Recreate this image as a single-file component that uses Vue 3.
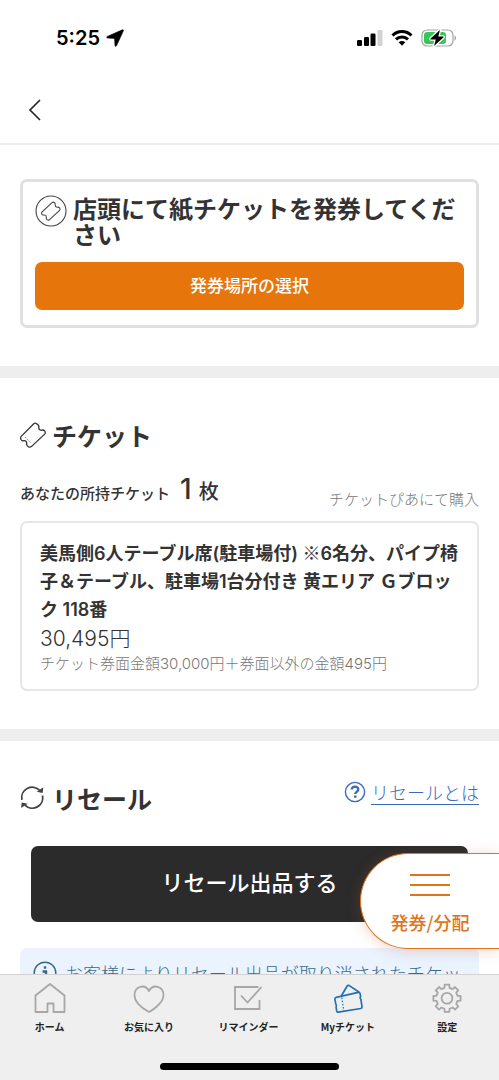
<script setup>
const tabs = [
  { id: 'home', label: 'ホーム' },
  { id: 'heart', label: 'お気に入り' },
  { id: 'reminder', label: 'リマインダー' },
  { id: 'ticket', label: 'Myチケット' },
  { id: 'settings', label: '設定' },
]

// Outline of an eight-toothed gear around the centre of a 32x32 box.
const gearPath = (() => {
  const points = []
  for (let i = 0; i < 8; i++) {
    const mid = (i * Math.PI) / 4
    for (const [offset, radius] of [[-0.24, 10.8], [-0.17, 13.8], [0.17, 13.8], [0.24, 10.8]]) {
      const a = mid + offset
      points.push(`${(16 + radius * Math.cos(a)).toFixed(2)} ${(16.3 + radius * Math.sin(a)).toFixed(2)}`)
    }
  }
  return `M${points.join('L')}z`
})()
</script>

<template>
  <div class="screen">
    <div class="status">
      <div class="time">
        <span>5:25</span>
        <svg width="18" height="18" viewBox="0 0 18 18"><path d="M16.400.8 1.300 7.400c-.9.500-.7 1.500.3 1.600l6.900.5.500 7c.1 1 1 1.200 1.500.3L17.400 1.800c.3-.7-.2-1.300-1-1z" fill="#000" stroke="#000" stroke-width=".6" /></svg>
      </div>
      <div class="signals">
        <svg width="26" height="18" viewBox="0 0 26 18">
          <rect x="0" y="11" width="5" height="6" rx="1.300" />
          <rect x="7" y="8" width="5" height="9" rx="1.300" />
          <rect x="13.500" y="4.500" width="5" height="12.500" rx="1.300" />
          <rect x="20.500" y="1" width="5" height="16" rx="1.300" fill="#d2d2d2" />
        </svg>
        <svg width="22" height="18" viewBox="0 0 22 18" fill="none" stroke="#000" stroke-width="3">
          <path d="M1.500 6.500c5.200-5.300 13.800-5.300 19 0" />
          <path d="M5 10.400c3.300-3.300 8.700-3.300 12 0" />
          <path d="M7.700 13.300c1.900-1.800 4.700-1.800 6.600 0L11 16.800z" fill="#000" stroke="none" />
        </svg>
        <svg width="36" height="18" viewBox="0 0 36 18">
          <rect x="1" y="1" width="31" height="16" rx="5" fill="#fff" stroke="#a4a4a4" stroke-width="1.200" />
          <rect x="3" y="3" width="22" height="12" rx="3.200" fill="#35c75a" />
          <path d="M33.500 6.500c2 .6 2 4.400 0 5z" fill="#a4a4a4" />
          <path d="M19 1 9.600 9.500c-.4.5-.2 1 .5 1h4.700L13 17l9.400-8.500c.4-.5.2-1-.5-1h-4.600z" stroke="#fff" stroke-width="2.600" paint-order="stroke" />
        </svg>
      </div>
    </div>

    <header class="header">
      <button class="back" type="button" aria-label="戻る">
        <svg width="14" height="24" viewBox="0 0 14 24" fill="none" stroke="#222" stroke-width="1.600"><path d="M12 2 2 12l10 10" /></svg>
      </button>
    </header>

    <main class="content">
      <section class="section issue">
        <div class="notice">
          <div class="notice-head">
            <svg class="notice-icon" width="32" height="32" viewBox="0 0 32 32" fill="none" stroke="#444" stroke-width="1.100" stroke-linejoin="round">
              <circle cx="16" cy="16" r="15" />
              <path d="M6.900 17.200 17 7.600Q18.300 6.600 19.600 7.700 20.500 8.700 20.200 10 20.200 12 22.200 12.200 23.800 11.900 24.700 13 25.500 14.300 24.600 15.400L14.500 24.700Q13.200 25.600 12 24.600 11 23.600 11.300 22.300 11.400 20.300 9.500 20 7.800 20.300 6.900 19.300 6.100 18.200 6.900 17.200z" />
            </svg>
            <h2>店頭にて紙チケットを発券してください</h2>
          </div>
          <button class="primary" type="button">発券場所の選択</button>
        </div>
      </section>

      <section class="section tickets">
        <h2 class="title">
          <svg width="26" height="26" viewBox="0 0 26 26" fill="none" stroke="#333" stroke-width="1.300" stroke-linejoin="round">
            <path d="M1.200 14.400 13.800 1.700Q15.200.6 16.600 1.700L18.400 3.300Q19.200 4.200 18.700 5.400 18.600 7.200 20 7.900 21.300 8.500 22.600 8 23.700 7.900 24.800 9.200 25.800 10.800 24.700 12.100L11.400 24.600Q9.900 25.700 8.400 24.800L7 23.400Q6.400 22.500 6.800 21.300 6.800 19.600 5.400 18.900 4 18.500 2.800 18.900 1.700 18.800.9 17.300.1 15.700 1.200 14.400z" />
            <path d="m5.200 15.200 6.200 6.400" stroke-dasharray="1.500 1.500" stroke="#777" stroke-width="1" />
          </svg>
          チケット
        </h2>
        <div class="summary">
          <p class="owned">あなたの所持チケット<strong>1</strong><b>枚</b></p>
          <p class="source">チケットぴあにて購入</p>
        </div>
        <article class="card">
          <h3>美馬側6人テーブル席(駐車場付) <span class="mark">※</span>6名分、パイプ椅子＆テーブル、駐車場1台分付き 黄エリア Ｇブロック 118番</h3>
          <p class="price">30,495円</p>
          <p class="detail">チケット券面金額30,000円＋券面以外の金額495円</p>
        </article>
      </section>

      <section class="section resale">
        <div class="resale-head">
          <h2 class="title">
            <svg width="26" height="26" viewBox="0 0 26 26" fill="none" stroke="#444" stroke-width="1.800">
              <path d="M1.900 14.900A10.500 10.500 0 0 1 19.500 5.200M22.500 10.500A10.500 10.500 0 0 1 4.900 20.200" />
              <path d="M23.300 2.300 22.700 8l-6-1.300zM1.100 23.100l.6-5.700 6 1.300z" fill="#444" stroke="none" />
            </svg>
            リセール
          </h2>
          <a class="help" href="#resale">
            <svg width="22" height="22" viewBox="0 0 22 22" fill="none" stroke="#3c6ab8">
              <circle cx="11" cy="11" r="9.600" stroke-width="1.400" />
              <path d="M7.800 8.500c.2-3.900 6.600-3.700 6.500.1 0 2.300-3.100 2.200-3.100 4.500" stroke-width="2.300" />
              <path d="M11.200 14.500v2.300" stroke-width="2.500" />
            </svg>
            <span>リセールとは</span>
          </a>
        </div>
        <button class="sell" type="button">リセール出品する</button>
        <div class="info">
          <svg width="24" height="24" viewBox="0 0 24 24" fill="none" stroke="#396889">
            <circle cx="12" cy="12" r="10.800" stroke-width="1.400" />
            <path d="M12 5.200v2.600M9.500 10.500H13v7M9.500 17.500h6" stroke-width="2.400" />
          </svg>
          <p>お客様によりリセール出品が取り消されたチケットがあります。</p>
        </div>
      </section>

      <button class="fab" type="button">
        <svg width="42" height="26" viewBox="0 0 42 26" stroke="#dd751c" stroke-width="2"><path d="M1 3h40M1 13h40M1 23h40" /></svg>
        <span>発券/分配</span>
      </button>
    </main>

    <nav class="tabs">
      <a v-for="tab in tabs" :key="tab.id" href="#" :class="['tab', { active: tab.id === 'ticket' }]">
        <svg width="32" height="32" viewBox="0 0 32 32" fill="none" stroke="currentColor" stroke-width="1.800" stroke-linejoin="round">
          <path v-if="tab.id === 'home'" d="M1.500 30V13.500L16 2l14.500 11.500V30H19.500v-8.500h-6V30z" />
          <path v-else-if="tab.id === 'heart'" d="M16 30Q1.500 22 1.500 13.500C1.500 3.500 12.200 1.800 16 9 19.800 1.800 30.500 3.500 30.500 13.500 30.500 22 16 30 16 30z" />
          <path v-else-if="tab.id === 'reminder'" d="M26.500 5H3v22h24.500V18M9 13.500l6.500 7L29.500 5" stroke-linejoin="miter" />
          <g v-else-if="tab.id === 'ticket'" stroke-width="1.700">
            <path d="M4.200 15.300 26.300 10.300Q27.700 10.100 28 11.400L28.600 14.200Q27.500 15.700 28.900 17.400L30 24.700Q30.100 26.200 28.700 26.500L6.400 30.200Q5 30.300 4.700 29L4.100 25.200Q5 23.400 3.700 21.700L2.900 17.200Q2.800 15.700 4.200 15.300z" />
            <path d="M9.300 14 15 4.200Q15.900 2.900 17.300 3.600L27.200 10.300" />
            <path d="m9.800 15.500 2 13.200" stroke-width="1.200" stroke-dasharray="1.600 1.600" />
          </g>
          <g v-else>
            <path :d="gearPath" />
            <circle cx="16" cy="16.300" r="5.400" />
          </g>
        </svg>
        <span>{{ tab.label }}</span>
      </a>
      <div class="home-indicator"></div>
    </nav>
  </div>
</template>

<style>
body { margin: 0; }
</style>

<style scoped>
* { box-sizing: border-box; }
h2, h3, p { margin: 0; }
svg { display: block; flex: none; }
button { font-family: inherit; border: 0; padding: 0; cursor: pointer; }
a { text-decoration: none; }

.screen {
  display: flex;
  flex-direction: column;
  height: 100vh;
  background: #fff;
  color: #333;
  font-family: "Noto Sans CJK JP", sans-serif;
}
.status {
  flex: none;
  display: flex;
  justify-content: space-between;
  align-items: center;
  height: 76px;
  padding: 0 42px 0 56px;
}
.time {
  display: flex;
  align-items: center;
  gap: 6px;
  color: #000;
  font: 600 20px/24px Inter, sans-serif;
}
.signals { display: flex; align-items: center; gap: 8px; }
.header {
  flex: none;
  display: flex;
  align-items: center;
  height: 69px;
  padding: 0 20px;
  border-bottom: 2px solid #ececec;
}
.back {
  display: grid;
  place-items: center;
  width: 30px;
  height: 40px;
  background: none;
}
.content {
  position: relative;
  flex: 1;
  min-height: 0;
  overflow: hidden auto;
  scrollbar-width: none;
}
.section { padding: 0 20px; }
.section + .section { border-top: 12px solid #eee; }
.issue { padding-top: 34px; padding-bottom: 38px; }
.notice {
  padding: 13px 12px 15px;
  border: 3px solid #e0e0e0;
  border-radius: 7px;
}
.notice-head { display: flex; gap: 6px; }
.notice h2 { flex: 1; font-size: 24px; line-height: 26px; }
.primary {
  display: block;
  width: 100%;
  height: 48px;
  margin-top: 15px;
  padding-bottom: 3px;
  border-radius: 7px;
  background: #e6750b;
  color: #fff;
  font-size: 17px;
  font-weight: 500;
}
.tickets { padding-top: 38px; padding-bottom: 38px; }
.title {
  display: flex;
  align-items: center;
  gap: 6px;
  font-size: 25px;
  line-height: 38px;
}
.summary {
  display: flex;
  justify-content: space-between;
  align-items: flex-end;
  height: 56px;
  padding-bottom: 1px;
  margin-bottom: 11px;
}
.owned { font-size: 15px; line-height: 32px; font-weight: 500; }
.owned strong { margin: 0 7px 0 10px; font: 500 28px/32px Inter, sans-serif; }
.owned b { font-size: 20px; font-weight: 500; }
.source { color: #777; font-size: 15px; line-height: 20px; font-weight: 300; }
.card {
  padding: 17px 18px 15px;
  border: 2px solid #e6e6e6;
  border-radius: 7px;
  font-family: Inter, "Noto Sans CJK JP", sans-serif;
}
.card h3 { font-size: 18px; line-height: 28px; font-weight: 600; }
.mark { font-family: "Noto Sans CJK JP", sans-serif; font-weight: 400; line-height: 1; }
.price { font-size: 21px; line-height: 30px; font-weight: 300; }
.detail { color: #777; font-size: 15px; line-height: 20px; font-weight: 300; }
.resale { padding-top: 38px; }
.resale-head { display: flex; justify-content: space-between; align-items: center; }
.help {
  display: flex;
  align-items: center;
  gap: 5px;
  margin-bottom: 12px;
  color: #3c6ab8;
  font-size: 18px;
  line-height: 24px;
  font-weight: 300;
}
.help span { border-bottom: 1px solid currentColor; }
.sell {
  display: block;
  width: calc(100% - 22px);
  height: 76px;
  margin: 29px 11px 26px;
  padding-bottom: 6px;
  border-radius: 7px;
  background: #2b2b2b;
  color: #fff;
  font-size: 22px;
  font-weight: 500;
}
.info {
  display: flex;
  gap: 8px;
  padding: 13px;
  border-radius: 7px;
  background: #eaf3fe;
  color: #396889;
}
.info p { flex: 1; font-size: 18px; line-height: 24px; font-weight: 300; }
.fab {
  position: absolute;
  right: 0;
  bottom: 25px;
  display: flex;
  flex-direction: column;
  align-items: center;
  gap: 11px;
  width: 139px;
  height: 96px;
  padding-top: 18px;
  border: 1px solid #dd751c;
  border-right: 0;
  border-radius: 48px 0 0 48px;
  background: #fff;
  color: #dd751c;
  box-shadow: 0 2px 14px rgba(200, 90, 50, 0.25);
  font-size: 18px;
  line-height: 26px;
  font-weight: 500;
}
.tabs {
  position: relative;
  flex: none;
  display: grid;
  grid-template-columns: repeat(5, 1fr);
  height: 106px;
  padding: 7px 2px 0 0;
  border-top: 1px solid #d2d2d2;
  background: #efefef;
}
.tab {
  display: flex;
  flex-direction: column;
  align-items: center;
  gap: 5px;
  color: #a7a7a7;
}
.tab.active { color: #2071b5; }
.tab span { color: #222; font-size: 10px; line-height: 16px; font-weight: 700; }
.home-indicator {
  position: absolute;
  bottom: 10px;
  left: 50%;
  width: 36%;
  height: 7px;
  margin-left: -18%;
  border-radius: 4px;
  background: #000;
}
</style>
